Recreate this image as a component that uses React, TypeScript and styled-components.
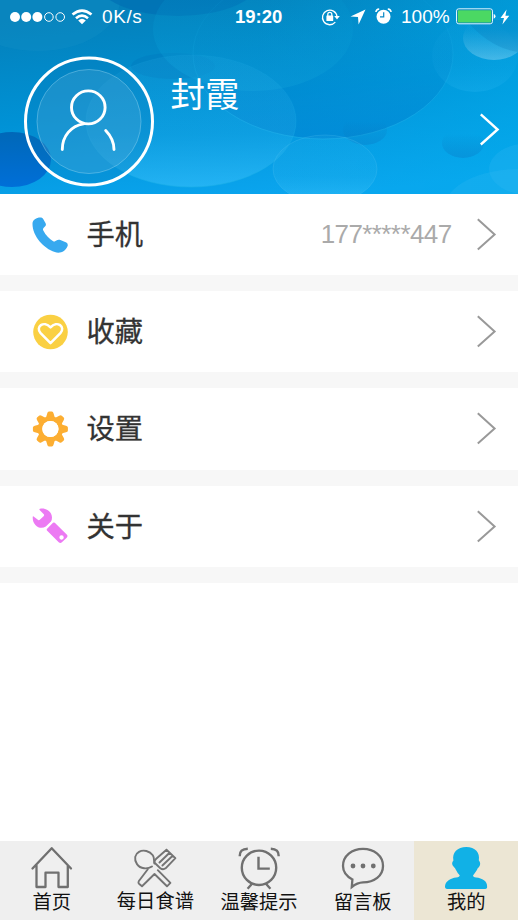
import React from "react";
import styled, { createGlobalStyle } from "styled-components";

const GlobalStyle = createGlobalStyle`
  * { box-sizing: border-box; }
  body {
    margin: 0;
    background: #fff;
    font-family: "Liberation Sans", "Noto Sans CJK SC", sans-serif;
  }
  svg { display: block; flex: none; }
`;

const Screen = styled.div`
  width: 518px;
  height: 920px;
  display: flex;
  flex-direction: column;
  overflow: hidden;
  background: #fff;
`;

const Header = styled.header`
  position: relative;
  height: 194px;
  flex: none;
  overflow: hidden;
  color: #fff;
`;

const Backdrop = styled.svg`
  position: absolute;
  inset: 0;
`;

const StatusBar = styled.div`
  position: relative;
  display: grid;
  grid-template-columns: 235px 86px 1fr;
  height: 33px;
  align-items: center;
`;

const StatusGroup = styled.div`
  display: flex;
  align-items: center;
  white-space: nowrap;
`;

const LeftStatus = styled(StatusGroup)`
  padding-left: 10px;
`;

const StatusText = styled.span<{ $width: number; $size: number; $spacing?: number; $bold?: boolean }>`
  width: ${(p) => p.$width}px;
  font-size: ${(p) => p.$size}px;
  letter-spacing: ${(p) => p.$spacing ?? 0}px;
  font-weight: ${(p) => (p.$bold ? 700 : 400)};
  line-height: 33px;
  white-space: nowrap;
`;

const Profile = styled.div`
  position: relative;
  display: flex;
  height: 161px;
  padding: 23px 18px 0 23px;
`;

const Name = styled.h1`
  flex: 1;
  margin: 13px 0 0 15.5px;
  font-size: 34.5px;
  line-height: 46px;
  font-weight: 400;
  font-family: "Noto Sans CJK SC", sans-serif;
`;

const ProfileArrow = styled.div`
  margin-top: 57px;
`;

const Menu = styled.main`
  flex: 1;
`;

const MenuRow = styled.div`
  display: flex;
  align-items: center;
  height: 97.2px;
  padding: 0 21.5px 0 32px;
  border-bottom: 16.2px solid #f7f7f7;
`;

const RowLabel = styled.span`
  flex: 1;
  margin: -3px 0 0 18.5px;
  font: 400 28.3px/40px "Noto Sans CJK SC", sans-serif;
  color: #333;
  -webkit-text-stroke: 0.3px #333;
`;

const RowValue = styled.span`
  margin-right: 23px;
  font-size: 26px;
  letter-spacing: -0.6px;
  color: #aaa;
`;

const TabBar = styled.nav`
  display: grid;
  grid-template-columns: repeat(5, 1fr);
  height: 79.5px;
  flex: none;
  background: #efefef;
`;

const Tab = styled.div<{ $active?: boolean }>`
  display: flex;
  flex-direction: column;
  align-items: center;
  padding-top: 5.5px;
  background: ${(p) => (p.$active ? "#ece6d4" : "transparent")};
`;

const TabLabel = styled.span<{ $drop?: number }>`
  margin-top: ${(p) => p.$drop ?? 0}px;
  font: 400 19.3px/24px "Noto Sans CJK SC", sans-serif;
  color: #111;
  white-space: nowrap;
`;

const Bubbles = () => (
  <Backdrop width="518" height="194" viewBox="0 0 518 194">
    <defs>
      <linearGradient id="base" x1="0.35" y1="0" x2="0.65" y2="1">
        <stop offset="0" stopColor="#0480ba" />
        <stop offset="0.5" stopColor="#0092d6" />
        <stop offset="1" stopColor="#0ba6f0" />
      </linearGradient>
      <linearGradient id="pale" x1="0" y1="0" x2="0" y2="1">
        <stop offset="0" stopColor="#30b5ec" stopOpacity="0.14" />
        <stop offset="0.6" stopColor="#30b5ec" stopOpacity="0.22" />
        <stop offset="1" stopColor="#45c8ff" stopOpacity="0.45" />
      </linearGradient>
      <linearGradient id="deep" x1="0" y1="0" x2="0" y2="1">
        <stop offset="0.3" stopColor="#0085c8" stopOpacity="0" />
        <stop offset="1" stopColor="#0085d4" stopOpacity="0.7" />
      </linearGradient>
      <linearGradient id="rim" x1="0" y1="0" x2="0" y2="1">
        <stop offset="0.3" stopColor="#1aaee8" stopOpacity="0.1" />
        <stop offset="1" stopColor="#1aaee8" stopOpacity="0.65" />
      </linearGradient>
      <linearGradient id="teal" x1="0" y1="0" x2="0" y2="1">
        <stop offset="0" stopColor="#0096cc" stopOpacity="0.1" />
        <stop offset="1" stopColor="#0c9cd8" stopOpacity="0.5" />
      </linearGradient>
      <linearGradient id="shine" x1="0" y1="0" x2="0" y2="1">
        <stop offset="0.3" stopColor="#5bbbe5" stopOpacity="0.05" />
        <stop offset="1" stopColor="#70c9ee" stopOpacity="0.6" />
      </linearGradient>
      <linearGradient id="navy" x1="0" y1="0" x2="0" y2="1">
        <stop offset="0" stopColor="#0068b8" />
        <stop offset="1" stopColor="#006fd8" />
      </linearGradient>
      <linearGradient id="dusk" x1="0" y1="0" x2="0" y2="1">
        <stop offset="0.2" stopColor="#0878bd" stopOpacity="0" />
        <stop offset="1" stopColor="#0880cc" stopOpacity="0.45" />
      </linearGradient>
      <linearGradient id="right" x1="0" y1="0" x2="1" y2="0">
        <stop offset="0.5" stopColor="#00a8e6" stopOpacity="0" />
        <stop offset="1" stopColor="#00acea" stopOpacity="0.5" />
      </linearGradient>
    </defs>
    <rect width="518" height="194" fill="url(#base)" />
    <rect width="518" height="194" fill="url(#right)" />
    <ellipse cx="38" cy="0" rx="82" ry="51" fill="#148fc6" opacity="0.35" />
    <ellipse cx="178" cy="-20" rx="82" ry="36" fill="#006db2" opacity="0.6" />
    <ellipse cx="173" cy="66" rx="42" ry="13" fill="#0078be" opacity="0.4" />
    <ellipse cx="323" cy="54" rx="130" ry="85" fill="url(#deep)" stroke="url(#rim)" />
    <ellipse cx="253" cy="29" rx="100" ry="62" fill="url(#teal)" />
    <ellipse cx="191" cy="121" rx="105" ry="66" fill="url(#pale)" stroke="url(#rim)" />
    <ellipse cx="12" cy="159.5" rx="39" ry="27.5" fill="url(#navy)" />
    <ellipse cx="365" cy="130" rx="22" ry="15" fill="url(#dusk)" />
    <ellipse cx="325" cy="169" rx="52" ry="34" fill="url(#pale)" stroke="#63c9f5" strokeOpacity="0.2" />
    <ellipse cx="475" cy="56" rx="43" ry="36" fill="url(#pale)" opacity="0.35" />
    <ellipse cx="494" cy="38" rx="31" ry="22" fill="url(#shine)" />
    <path d="M466 20Q490 48 518 52V20Z" fill="#0879b6" opacity="0.25" />
    <ellipse cx="463" cy="143" rx="21" ry="15" fill="url(#dusk)" />
    <ellipse cx="520" cy="207" rx="75" ry="38" fill="#40bff5" opacity="0.2" />
    <ellipse cx="530" cy="169" rx="41" ry="26" fill="#40bff5" opacity="0.2" />
  </Backdrop>
);

const Signal = () => (
  <svg width="56" height="12" viewBox="0 0 56 12">
    {[5, 16.2, 27.4].map((x) => <circle key={x} cx={x} cy="6" r="5" fill="#fff" />)}
    {[38.9, 50.2].map((x) => <circle key={x} cx={x} cy="6" r="4.3" fill="none" stroke="#fff" strokeWidth="1" />)}
  </svg>
);

const Wifi = () => (
  <svg width="22" height="16" viewBox="0 0 22 16" fill="none" stroke="#fff" strokeWidth="2.7">
    <path d="M1.5 5.5Q11-2.3 20.5 5.5M5 9.2Q11 4.2 17 9.2" />
    <path d="M7.2 11.5Q11 8 14.8 11.5L11 15.3Z" fill="#fff" stroke="none" />
  </svg>
);

const RotationLock = () => (
  <svg width="20" height="18" viewBox="0 0 20 18" fill="none" stroke="#fff" strokeWidth="1.3">
    <path d="M14.3 14.2A7.3 7.3 0 1 1 16 8.5" />
    <path d="M13.2 8h5.6L16 11.5Z" fill="#fff" stroke="none" />
    <rect x="5.4" y="7.5" width="6.8" height="5.5" rx=".5" fill="#fff" stroke="none" />
    <path d="M6.8 8V6.3a2 2 0 0 1 4 0V8" />
  </svg>
);

const Location = () => (
  <svg width="16" height="16" viewBox="0 0 16 16" fill="#fff"><path d="M15.5 .5L8.6 15.5L8 8.1L.5 7.4Z" /></svg>
);

const SmallAlarm = () => (
  <svg width="17" height="17" viewBox="0 0 17 17">
    <circle cx="8.5" cy="8.7" r="7" fill="#fff" />
    <path d="M.9 4Q1.2 1.4 4.2 1.1M12.8 1.1Q15.8 1.4 16.1 4" stroke="#fff" strokeWidth="1.5" fill="none" />
    <path d="M8.7 4.2V8.8H5" stroke="#0788c5" strokeWidth="1.2" fill="none" />
  </svg>
);

const Battery = () => (
  <svg width="40" height="17" viewBox="0 0 40 17">
    <rect x=".5" y=".8" width="36" height="15" rx="2.3" fill="#0786bd" stroke="#dff5ff" />
    <rect x="1.8" y="2.2" width="33.4" height="12.2" rx="1" fill="#4bd863" />
    <path d="M37.7 6Q39.5 6.4 39.5 8.3T37.7 10.8Z" fill="#fff" />
  </svg>
);

const Bolt = () => (
  <svg width="10" height="16" viewBox="0 0 10 16" fill="#fff"><path d="M6.6.5L.5 8.9H4L2.4 15.5L9.3 6.7H5.4Z" /></svg>
);

const Avatar = () => (
  <svg width="132" height="132" viewBox="0 0 132 132" fill="none">
    <circle cx="66" cy="65.5" r="63.5" fill="#0878b8" fillOpacity=".25" stroke="#fff" strokeWidth="3" />
    <circle cx="66" cy="65.5" r="52" fill="#76b9dc" fillOpacity=".2" stroke="#8dd3f0" strokeOpacity=".45" strokeWidth="1" />
    <g stroke="#fff" strokeWidth="2.9" strokeLinecap="round">
      <ellipse cx="65.3" cy="51.4" rx="16.8" ry="16.5" />
      <path d="M60.5 67.9C48 70 39.3 80 39.3 93.5M82.7 74.5C87.5 79.5 91 86.2 91 93.5" />
    </g>
  </svg>
);

const Chevron = ({ white = false }: { white?: boolean }) => (
  <svg width="22" height="33" viewBox="0 0 22 33" fill="none" stroke={white ? "#fff" : "#999"} strokeWidth={white ? 2.4 : 2}>
    <path d="M2.8 1.3L19.6 16.5L2.8 31.5" />
  </svg>
);

const Phone = () => (
  <svg width="36" height="36" viewBox="0 0 36 36" fill="#37a9ef">
    <path d="M.5 6.5C.6 2.5 5 .1 9.2.5Q10.5.8 11.2 2L13.6 6.3Q14.4 8.1 13.2 9.2L11.5 11Q10.6 12.2 11.3 13.5C13.8 18.3 17.3 22 21.2 24.3Q22.4 24.9 23.4 24L25.4 22.9Q26.6 22.5 27.8 22.8L34.3 25.6Q36.3 26.8 35.6 29C33.5 34.5 28 36.9 22.8 35C11.5 31.4.2 18.5.5 6.5Z" />
  </svg>
);

const Favorite = () => (
  <svg width="36" height="36" viewBox="0 0 36 36">
    <circle cx="18.5" cy="18" r="17.3" fill="#fad043" />
    <path d="M18.5 29.2L8.6 19.1C3 12.8 11.8 6 18.5 13.3C25.2 6 34 12.8 28.4 19.1Z" fill="none" stroke="#fff" strokeWidth="2.5" strokeLinejoin="round" />
  </svg>
);

const Gear = () => (
  <svg width="36" height="36" viewBox="0 0 36 36">
    <g fill="#fcae32">
      {[0, 45, 90, 135, 180, 225, 270, 315].map((angle) => (
        <path key={angle} transform={`rotate(${angle} 18.4 18)`} d="M13.6 8L15.2 2.4Q15.6.5 17 .5H19.8Q21.2.5 21.6 2.4L23.2 8Z" />
      ))}
    </g>
    <circle cx="18.4" cy="18" r="10.4" fill="none" stroke="#fcae32" strokeWidth="4.6" />
    <circle cx="18.4" cy="18" r="8.1" fill="#fff" />
  </svg>
);

const Wrench = () => (
  <svg width="36" height="36" viewBox="0 0 36 36" fill="#ec7af3">
    <path d="M8 .8C13.5-.6 19.9 3.5 20 9.4Q20 11.4 19 13.4L13.8 18.6C7.5 22.5-.1 16.6.8 8.6Q1 7.8 1.6 8.4L6.2 12Q7 12.5 7.8 11.8L11.6 8.2Q12.6 7.1 11.8 6.2L7.6 2.1Q7 1.3 8 .8Z" />
    <path fillRule="evenodd" d="M21 14.8Q21.9 14 22.8 14.8L34.7 26.4Q36.3 28 34.7 29.7L29.9 34.3Q28.3 35.8 26.7 34.2L15.2 22.8Q14.2 21.8 15.1 20.8ZM29.5 27.3A2.2 2.2 0 1 0 29.6 31.7A2.2 2.2 0 1 0 29.5 27.3Z" />
  </svg>
);

const HomeIcon = () => (
  <svg width="46" height="44" viewBox="0 0 46 44" fill="none" stroke="#707070" strokeWidth="2.3" strokeLinecap="round" strokeLinejoin="round">
    <path d="M3.5 22.5L22.7 2.2L42 22.5M7.5 19.5V41H16.5V26.7H29.5V41H38.8V19.5" />
  </svg>
);

const Recipes = () => (
  <svg width="46" height="44" viewBox="0 0 46 44" fill="none" stroke="#747474" strokeWidth="1.9" strokeLinejoin="round" strokeLinecap="round">
    <path d="M20 20.5C15.5 23.3 8.4 23.2 5 18.1C1.6 13 3 8 7 5.8C11.5 3.4 17.7 5 20.8 9.3C22.8 12.2 21.6 15 22.4 17.5" />
    <path d="M15.8 23.2L6.7 35.3Q6 36.7 7 37.7L10 40.3L22.5 28L35 40.3L38.4 36.9L25.8 24.2" />
    <path d="M34.5 3.8L43.4 12.2L33.6 22.3Q31 24.2 28.3 22.2L22.6 16.8M34.5 3.8L24.2 12.8Q22 14.7 22.6 16.8M37.3 7L27.5 16.5M40.4 10L30.4 19.5" />
  </svg>
);

const AlarmIcon = () => (
  <svg width="46" height="44" viewBox="0 0 46 44" fill="none" stroke="#707070" strokeWidth="2.4">
    <circle cx="23" cy="21.8" r="17.2" />
    <path d="M22.5 10.8V22.6H33.8M3.8 10.2Q3.4 3 11.8 2.7M34.8 2.7Q43 3 42.6 10.2M16.5 37.3L11.6 42.7M29.5 37.3L34.4 42.7" />
  </svg>
);

const Messages = () => (
  <svg width="46" height="44" viewBox="0 0 46 44" fill="none" stroke="#707070" strokeWidth="2.3">
    <path d="M12.4 33.4C6.3 30.2 3 25.5 3 20C3 10.1 11.8 2.9 23 2.9S43 10.1 43 20S34.2 36.4 23 36.4C18.5 36.6 15.5 38.1 11.8 41Z" />
    {[13, 23, 33.3].map((x) => <circle key={x} cx={x} cy="20" r="2.4" fill="#707070" stroke="none" />)}
  </svg>
);

const Person = () => (
  <svg width="46" height="44" viewBox="0 0 46 44" fill="#11b1e6">
    <path d="M23.3 1C32.2 1 37.2 6.5 35.8 14.2Q38.5 17.6 36 21Q34.5 22 33.9 24Q31.8 27.3 30 29.4Q30.1 31.1 33 31.6C39.4 32.2 44.1 35.1 44.1 40.3Q44.4 43 42.1 43H4.2Q1.9 43 2 40.3C2.3 35.1 7.7 32.2 13.2 31.5Q16.8 31.2 16.7 29.3Q14.4 27 13 24Q12.2 22 10.7 20.8Q7.7 17.7 10.4 14.5C8.9 6.4 14.4 1 23.3 1Z" />
  </svg>
);

const menuItems = [
  { label: "手机", icon: <Phone />, value: "177*****447" },
  { label: "收藏", icon: <Favorite /> },
  { label: "设置", icon: <Gear /> },
  { label: "关于", icon: <Wrench /> },
];

const tabs = [
  { label: "首页", icon: <HomeIcon />, drop: -1.5 },
  { label: "每日食谱", icon: <Recipes />, drop: -2.5 },
  { label: "温馨提示", icon: <AlarmIcon />, drop: -1 },
  { label: "留言板", icon: <Messages />, drop: -1 },
  { label: "我的", icon: <Person />, drop: -1.5, active: true },
];

const WifiSlot = styled.div`margin: 0 9px 0 5px;`;
const BatterySlot = styled.div`margin-right: 4px;`;
const StatusIcons = styled.div`
  display: flex;
  align-items: center;
  gap: 9px;
  width: 80px;
`;

export default function App() {
  return (
    <>
      <GlobalStyle />
      <Screen>
        <Header>
          <Bubbles />
          <StatusBar>
            <LeftStatus>
              <Signal />
              <WifiSlot><Wifi /></WifiSlot>
              <StatusText $width={50} $size={19} $spacing={0.6}>0K/s</StatusText>
            </LeftStatus>
            <StatusText $width={60} $size={18.5} $bold>19:20</StatusText>
            <StatusGroup>
              <StatusIcons><RotationLock /><Location /><SmallAlarm /></StatusIcons>
              <StatusText $width={55} $size={19}>100%</StatusText>
              <BatterySlot><Battery /></BatterySlot>
              <Bolt />
            </StatusGroup>
          </StatusBar>
          <Profile>
            <Avatar />
            <Name>封霞</Name>
            <ProfileArrow><Chevron white /></ProfileArrow>
          </Profile>
        </Header>
        <Menu>
          {menuItems.map((item) => (
            <MenuRow key={item.label}>
              {item.icon}
              <RowLabel>{item.label}</RowLabel>
              {item.value && <RowValue>{item.value}</RowValue>}
              <Chevron />
            </MenuRow>
          ))}
        </Menu>
        <TabBar>
          {tabs.map((tab) => (
            <Tab key={tab.label} $active={tab.active}>
              {tab.icon}
              <TabLabel $drop={tab.drop}>{tab.label}</TabLabel>
            </Tab>
          ))}
        </TabBar>
      </Screen>
    </>
  );
}
